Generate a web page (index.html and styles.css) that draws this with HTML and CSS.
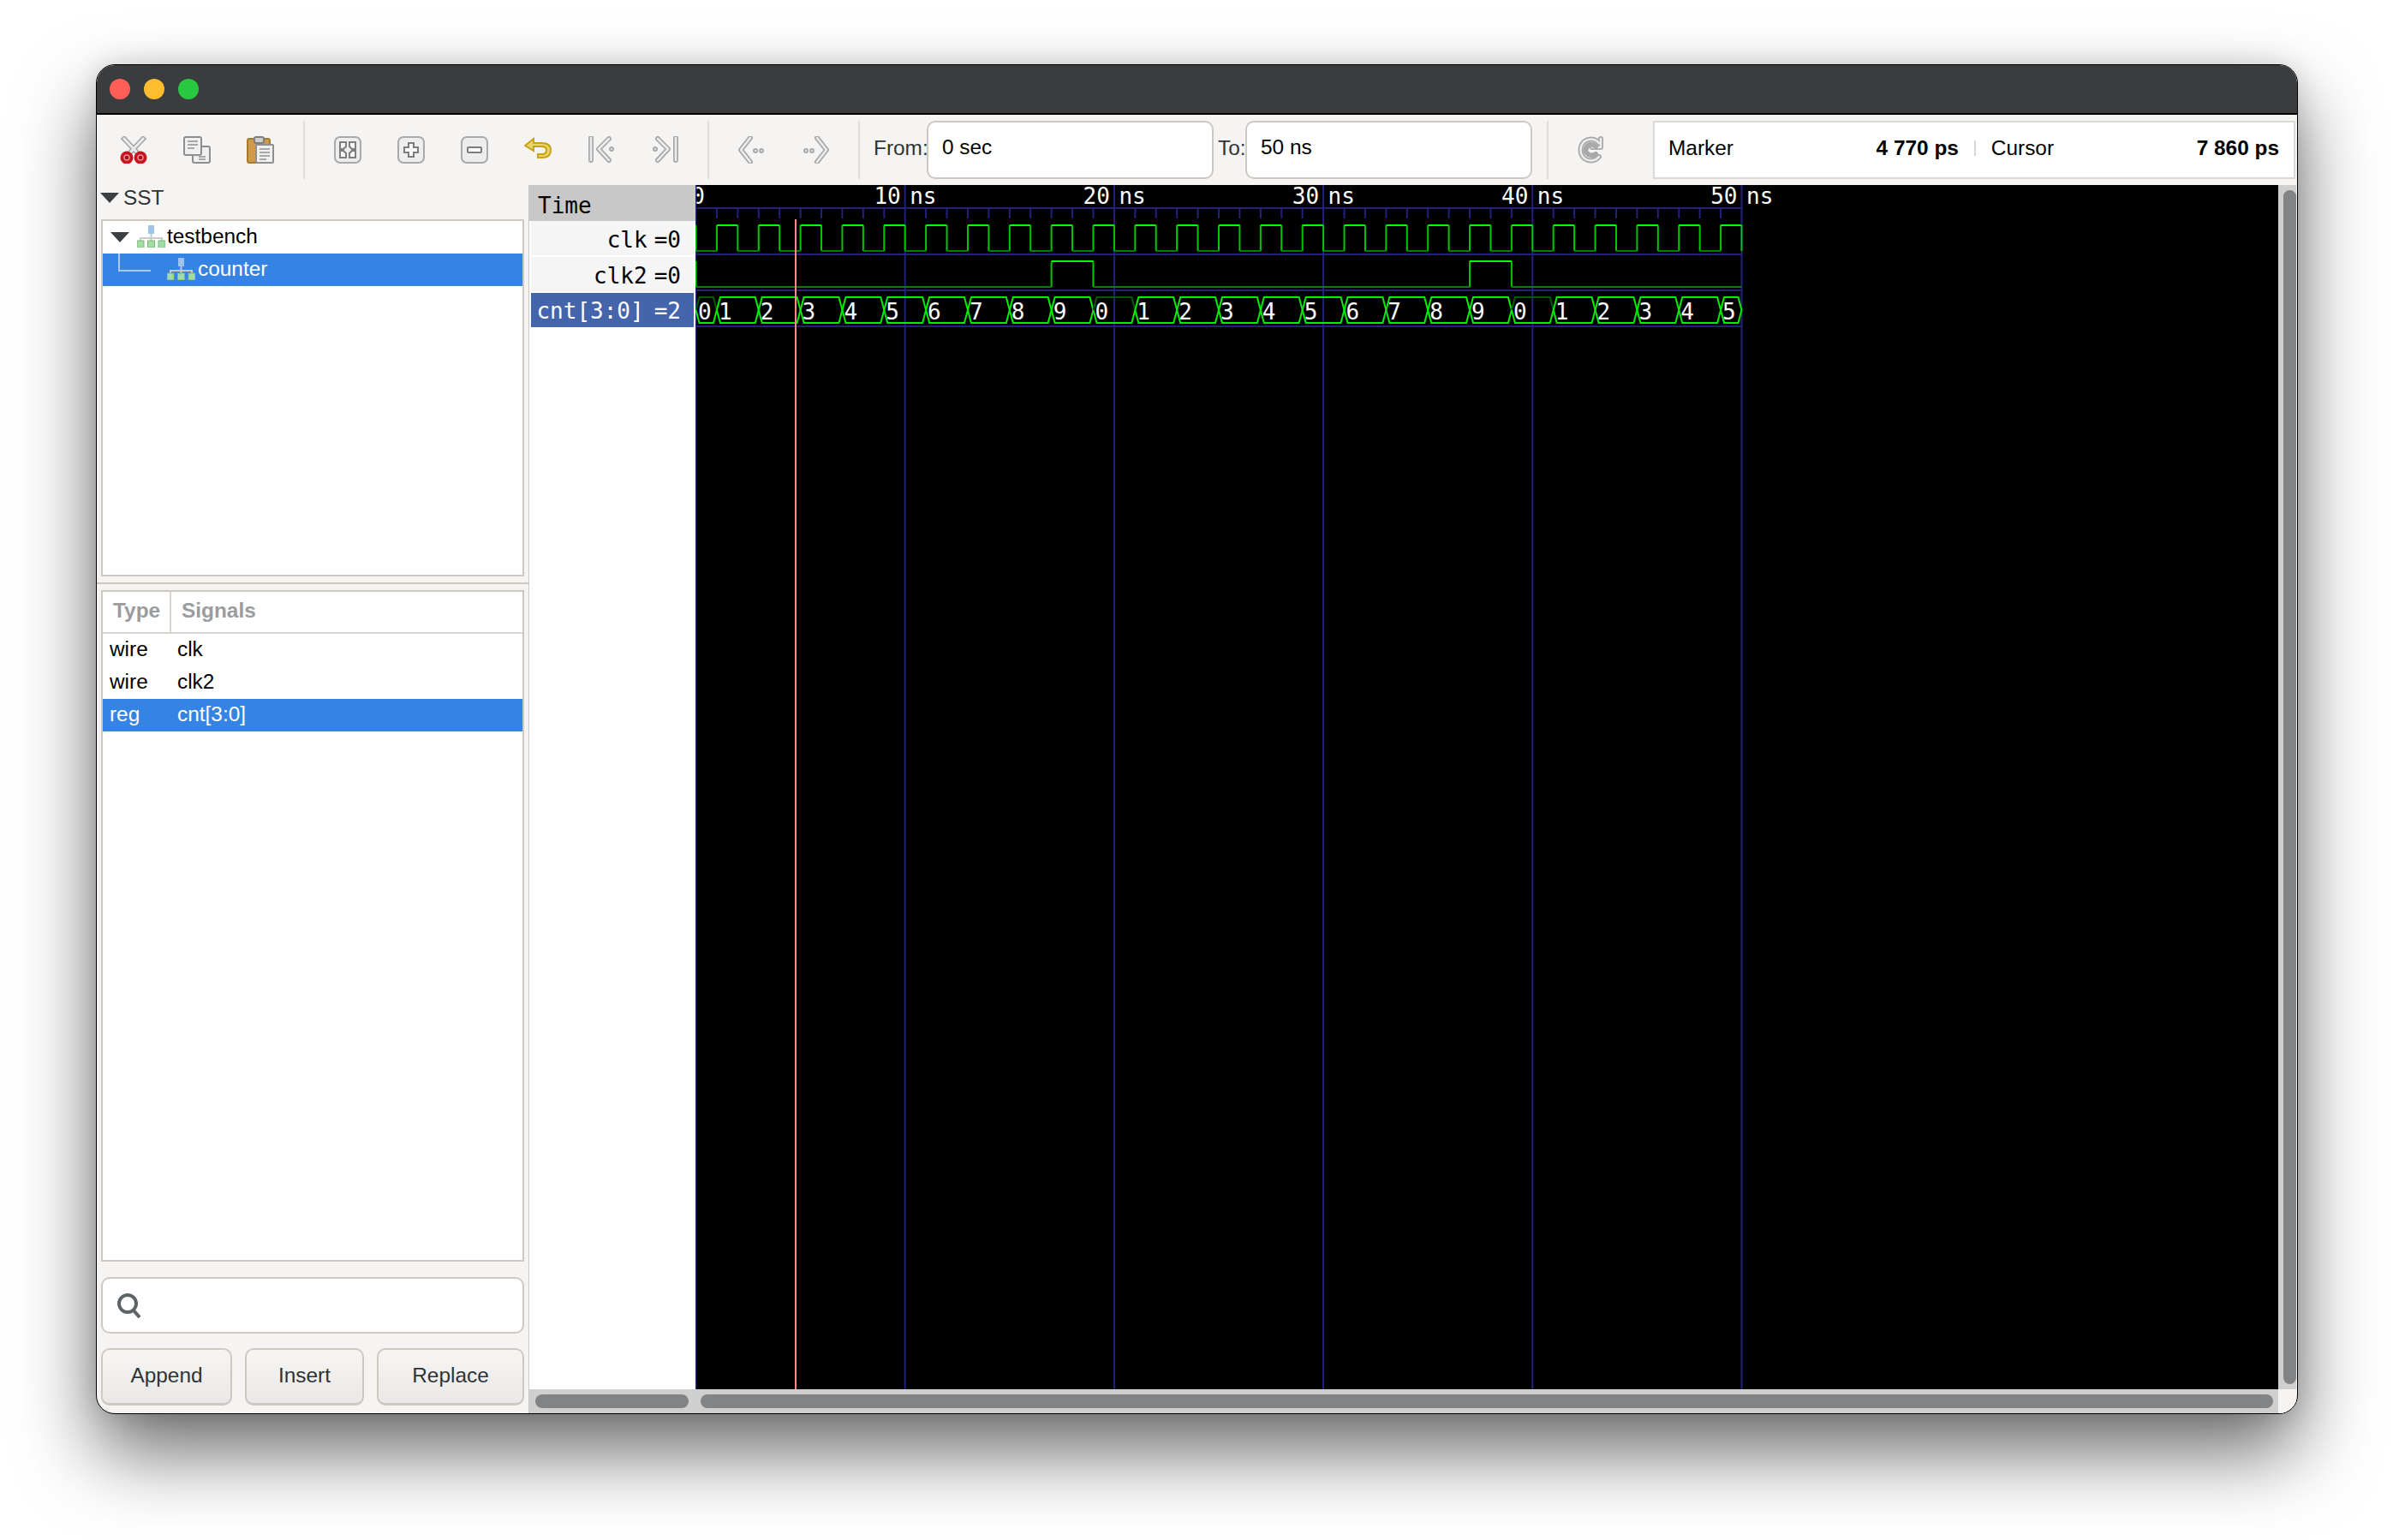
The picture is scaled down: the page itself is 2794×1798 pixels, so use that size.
FILE: index.html
```html
<!DOCTYPE html>
<html lang="en">
<head>
    <meta charset="UTF-8">
    <link rel="stylesheet" href="styles.css">
    <title>GTKWave</title>
</head>
<body>
    <div id="window">
        <div class="titlebar">
            <span class="light red"></span>
            <span class="light yellow"></span>
            <span class="light green"></span>
        </div>

        <div class="toolbar">
            <svg class="icon" viewBox="0 0 32 32">
                <path class="blade" d="M3 1 21 20M29 1 11 20"/>
                <path class="blade-in" d="M4 2 21 20M28 2 11 20"/>
                <circle class="ring" cx="8" cy="25" r="7.5"/>
                <circle class="ring" cx="24" cy="25" r="7.5"/>
                <circle class="ring-in" cx="8" cy="25" r="3"/>
                <circle class="ring-in" cx="24" cy="25" r="3"/>
            </svg>
            <svg class="icon" viewBox="0 0 32 32">
                <rect class="sheet" x="11" y="12" width="20" height="19" rx="2"/>
                <path class="txt" d="M18 24h8M18 27h8"/>
                <rect class="sheet" x="1" y="1" width="20" height="21" rx="2"/>
                <path class="txt" d="M5 6h12M5 10h12M5 14h8"/>
            </svg>
            <svg class="icon" viewBox="0 0 32 32">
                <rect class="board" x="1" y="3" width="26" height="28" rx="2"/>
                <rect class="clip" x="9" y="1" width="11" height="7" rx="2"/>
                <rect class="sheet" x="11" y="10" width="20" height="21" rx="1"/>
                <path class="txt" d="M15 15h12M15 19h12M15 23h12M15 27h8"/>
            </svg>
            <span class="sep"></span>
            <svg class="icon" viewBox="0 0 32 32">
                <rect class="key" x="1" y="1" width="30" height="30" rx="6"/>
                <path class="mark" d="M7 7h7v5l-3 3H7zM25 7h-7v5l3 3h4zM7 25h7v-5l-3-3H7zM25 25h-7v-5l3-3h4z"/>
            </svg>
            <svg class="icon" viewBox="0 0 32 32">
                <rect class="key" x="1" y="1" width="30" height="30" rx="6"/>
                <path class="mark" d="M13 8h6v5h5v6h-5v5h-6v-5H8v-6h5z"/>
            </svg>
            <svg class="icon" viewBox="0 0 32 32">
                <rect class="key" x="1" y="1" width="30" height="30" rx="6"/>
                <rect class="mark" x="8" y="13" width="16" height="6" rx="1"/>
            </svg>
            <svg class="icon" viewBox="0 0 32 32">
                <path class="undo" d="M1 11 11 3v5h9c7 0 11 3 11 8 0 6-4 9-10 9h-5v-4h5c3 0 5-2 5-5 0-2-2-4-6-4h-9v5z"/>
            </svg>
            <svg class="icon nudge" viewBox="0 0 32 32">
                <path class="nav" d="M3 2v26M24 3 12 15l12 13"/>
                <path class="nav-in" d="M3 2v26M24 3 12 15l12 13"/>
                <circle class="dot" cx="27" cy="15" r="2"/>
            </svg>
            <svg class="icon" viewBox="0 0 32 32">
                <path class="nav" d="M29 2v26M8 3l12 12L8 28"/>
                <path class="nav-in" d="M29 2v26M8 3l12 12L8 28"/>
                <circle class="dot" cx="5" cy="15" r="2"/>
            </svg>
            <span class="sep"></span>
            <svg class="icon" viewBox="0 0 32 32">
                <path class="nav" d="M14 2 3 16l11 14"/>
                <path class="nav-in" d="M14 2 3 16l11 14"/>
                <circle class="dot" cx="20" cy="17" r="2"/>
                <circle class="dot" cx="27" cy="17" r="2"/>
            </svg>
            <svg class="icon" viewBox="0 0 32 32">
                <path class="nav" d="M18 2l11 14-11 14"/>
                <path class="nav-in" d="M18 2l11 14-11 14"/>
                <circle class="dot" cx="5" cy="17" r="2"/>
                <circle class="dot" cx="12" cy="17" r="2"/>
            </svg>
            <span class="sep sep-range"></span>
            <label class="range-label">From:</label>
            <div class="entry">0 sec</div>
            <label class="range-label to-label">To:</label>
            <div class="entry">50 ns</div>
            <span class="sep sep-reload"></span>
            <svg class="icon" viewBox="0 0 32 32">
                <path class="nav" d="M26 8C22 3 15 2 9 6 3 11 3 21 9 26c6 4 13 3 17-2M28 3v10H18"/>
                <path class="nav-in" d="M26 8C22 3 15 2 9 6 3 11 3 21 9 26c6 4 13 3 17-2M28 3v10H18"/>
                <path class="nav" d="M22 12c-3-3-8-3-10 0-2 3-2 6 0 8 3 3 7 3 10 1"/>
            </svg>
            <div class="readout">
                <span class="readout-name">Marker</span>
                <b class="readout-val">4 770 ps</b>
                <span class="readout-sep"></span>
                <span class="readout-name cursor-name">Cursor</span>
                <b class="readout-val">7 860 ps</b>
            </div>
        </div>

        <div class="main">
            <div class="sidebar">
                <div class="sst"><span class="arrow"></span>SST</div>
                <div class="tree box">
                    <div class="tree-row">
                        <span class="arrow tree-arrow"></span>
                        <svg class="hier" viewBox="0 0 33 26">
                            <rect class="hier-top" x="13" y="0" width="7" height="10"/>
                            <path class="hier-line" d="M16.5 10v5M4 19v-4h25v4M16.5 15v4"/>
                            <rect class="hier-leaf" x="0" y="18" width="8" height="8"/>
                            <rect class="hier-leaf" x="12.5" y="18" width="8" height="8"/>
                            <rect class="hier-leaf" x="25" y="18" width="8" height="8"/>
                        </svg>
                        <span>testbench</span>
                    </div>
                    <div class="tree-row selected child">
                        <span class="branch"></span>
                        <svg class="hier" viewBox="0 0 33 26">
                            <rect class="hier-top" x="13" y="0" width="7" height="10"/>
                            <path class="hier-line" d="M16.5 10v5M4 19v-4h25v4M16.5 15v4"/>
                            <rect class="hier-leaf" x="0" y="18" width="8" height="8"/>
                            <rect class="hier-leaf" x="12.5" y="18" width="8" height="8"/>
                            <rect class="hier-leaf" x="25" y="18" width="8" height="8"/>
                        </svg>
                        <span>counter</span>
                    </div>
                </div>
                <div class="pane-handle"></div>
                <div class="signals box">
                    <div class="signals-head">
                        <span class="head-type">Type</span>
                        <span class="head-name">Signals</span>
                    </div>
                    <div class="signal-row"><span class="col-type">wire</span><span>clk</span></div>
                    <div class="signal-row"><span class="col-type">wire</span><span>clk2</span></div>
                    <div class="signal-row selected"><span class="col-type">reg</span><span>cnt[3:0]</span></div>
                </div>
                <div class="search">
                    <svg class="search-icon" viewBox="0 0 30 30">
                        <circle cx="13" cy="13" r="10"/>
                        <path d="M20 21l7 8"/>
                    </svg>
                </div>
                <div class="buttons">
                    <button class="btn btn-append">Append</button>
                    <button class="btn btn-insert">Insert</button>
                    <button class="btn btn-replace">Replace</button>
                </div>
            </div>

            <div class="viewer">
                <div class="names">
                    <div class="names-head">Time</div>
                    <div class="name-row"><span>clk</span><span class="name-val">=0</span></div>
                    <div class="name-row"><span>clk2</span><span class="name-val">=0</span></div>
                    <div class="name-row current"><span>cnt[3:0]</span><span class="name-val">=2</span></div>
                </div>
                <svg id="wave" width="1848" height="1406" viewBox="0 0 1848 1406"></svg>
                <div class="vscroll"><div class="thumb"></div></div>
                <div class="hscroll names-scroll"><div class="thumb"></div></div>
                <div class="hscroll wave-scroll"><div class="thumb"></div></div>
                <div class="corner"></div>
            </div>
        </div>
    </div>

    <script>
        let wave = document.getElementById('wave'),
            svg = '',
            step = 24.42
        function x(t){
            return 0.5 + t * step
        }
        function line(cls, d){
            svg += `<path class="${cls}" d="${d}"/>`
        }
        function text(cls, px, py, str){
            svg += `<text class="${cls}" x="${px}" y="${py}">${str}</text>`
        }

        // grid and ruler
        let ticks = ''
        for(let t = 0; t <= 50; t++){
            if(t % 10 == 0){
                ticks += `M${x(t)} 0V1406`
                if(t > 0){
                    text('label end', x(t) - 5, 22, t)
                    text('label', x(t) + 5.5, 22, 'ns')
                }
            }else{
                ticks += `M${x(t)} 27V39`
            }
        }
        text('label end', 11, 22, 0)
        line('grid', ticks + `M0 27H${x(50)}M0 81H${x(50)}M0 123H${x(50)}M0 165H${x(50)}`)

        // single bit signal: list of edges, starts low
        function bit(edges, hi, lo){
            let level = 0, from = 0, high = '', low = '', side = `M${x(0)} ${hi}V${lo}`
            edges.concat([50]).forEach(t=>{
                if(level){
                    high += `M${x(from)} ${hi}H${x(t)}`
                }else{
                    low += `M${x(from)} ${lo}H${x(t)}`
                }
                if(t < 50 || level){
                    side += `M${x(t)} ${hi}V${lo}`
                }
                level = 1 - level
                from = t
            })
            line('side', side)
            line('low', low)
            line('high', high)
        }
        let clk = []
        for(let t = 1; t < 50; t++){
            clk.push(t)
        }
        bit(clk, 47, 77)
        bit([17, 19, 37, 39], 89, 119)

        // cnt[3:0]
        let busTop = 131, busBot = 161, busMid = 146, slope = 4
        let edges = [0]
        for(let t = 1; t < 50; t += 2){
            edges.push(t)
        }
        edges.push(50)
        edges.slice(0, -1).forEach((t, i)=>{
            let a = x(t), b = x(edges[i + 1]), val = i % 10
            let upper = `M${a} ${busMid}L${a + slope} ${busTop}H${b - slope}L${b} ${busMid}`
            let lower = `M${a} ${busMid}L${a + slope} ${busBot}H${b - slope}L${b} ${busMid}`
            line(val == 0 ? 'bus-zero' : 'bus', upper)
            line('bus', lower)
            text('label', i == 0 ? 3 : a + 2, 157, val)
        })

        // marker
        line('marker', `M${x(4.77)} 40V1406`)
        wave.innerHTML = svg
    </script>
</body>
</html>
```

FILE: styles.css
```css
body{
    margin: 0;
    height: 1798px;
    box-sizing: border-box;
    padding: 75px 0 0 112px;
    background: #fff;
    overflow: hidden;
    font-family: "Liberation Sans", Arial, sans-serif;
    font-size: 24.4px;
    color: #000;
}
#window{
    width: 2571px;
    height: 1576px;
    box-sizing: border-box;
    border: 1px solid #000;
    border-radius: 22px;
    overflow: hidden;
    background: #f5f4f2;
    box-shadow: 0 44px 90px rgba(0,0,0,.58), 0 0 30px rgba(0,0,0,.12);
    display: flex;
    flex-direction: column;
}

/* title bar */
.titlebar{
    height: 56px;
    flex: none;
    background: #3b3c3e;
    border-bottom: 2px solid #000;
    display: flex;
    align-items: center;
    gap: 16px;
    padding-left: 15px;
}
.light{
    width: 24px;
    height: 24px;
    border-radius: 50%;
}
.red{background: #ff5f57;}
.yellow{background: #febc2e;}
.green{background: #28c840;}

/* toolbar */
.toolbar{
    height: 82px;
    flex: none;
    display: flex;
    align-items: center;
    padding-left: 27px;
    gap: 42px;
}
.icon{
    width: 32px;
    height: 32px;
    flex: none;
    fill: none;
}
.nudge{margin-left: 1px; margin-right: -1px;}
.sep{
    width: 2px;
    height: 68px;
    background: #dfdedb;
    margin: 0 -8px;
    flex: none;
}
.sep-range{margin-right: -26px;}
.sep-reload{margin-left: -25px; margin-right: -9px;}
.range-label{
    color: #2e3436;
    width: 62px;
    margin-right: -42px;
    padding-bottom: 5px;
    flex: none;
}
.to-label{
    width: 32px;
    margin-left: -37px;
}
.entry{
    width: 335px;
    height: 68px;
    flex: none;
    box-sizing: border-box;
    background: #fff;
    border: 2px solid #cdc9c2;
    border-radius: 10px;
    padding-left: 16px;
    line-height: 57px;
}
.readout{
    width: 750px;
    height: 68px;
    box-sizing: border-box;
    flex: none;
    margin-left: 15px;
    background: #fff;
    border: 2px solid #dcdad6;
    padding: 0 17px 5px 16px;
    display: flex;
    align-items: center;
    line-height: 57px;
}
.readout-name{margin-right: auto;}
.readout-sep{
    width: 2px;
    height: 18px;
    background: #d8d8d8;
    margin: 0 18px;
}
.cursor-name{margin-right: auto;}

/* toolbar icon parts */
.blade{stroke: #a5a5a5; stroke-width: 6;}
.blade-in{stroke: #e9e9e9; stroke-width: 3;}
.ring{fill: #c8141f;}
.ring-in{fill: #b00c18; stroke: #e88a90; stroke-width: 1.5;}
.sheet{fill: #f0f0ee; stroke: #8e8e8e; stroke-width: 2;}
.txt{stroke: #a8a8a8; stroke-width: 2;}
.board{fill: #cf9a4c; stroke: #a97a2c; stroke-width: 2;}
.clip{fill: #cfcfcf; stroke: #7f7f7f; stroke-width: 2;}
.key{fill: #ededeb; stroke: #a9a9a9; stroke-width: 2;}
.mark{fill: #f8f8f8; stroke: #7d7d7d; stroke-width: 2;}
.undo{fill: #e9d46a; stroke: #c8a414; stroke-width: 2;}
.nav{stroke: #a9a9a9; stroke-width: 6; stroke-linecap: round; stroke-linejoin: round; fill: none;}
.nav-in{stroke: #ececec; stroke-width: 2.5; stroke-linecap: round; stroke-linejoin: round; fill: none;}
.dot{fill: #eee; stroke: #a9a9a9; stroke-width: 2;}

/* main area */
.main{
    flex: 1;
    display: flex;
    min-height: 0;
}
.sidebar{
    width: 505px;
    flex: none;
    box-sizing: border-box;
    border-right: 1px solid #cdc9c2;
    padding: 0 5px;
    display: flex;
    flex-direction: column;
}
.sst{
    height: 40px;
    flex: none;
    display: flex;
    align-items: center;
    gap: 5px;
    padding-bottom: 10px;
    box-sizing: border-box;
    color: #2e3436;
}
.arrow{
    width: 0;
    height: 0;
    flex: none;
    border-left: 11px solid transparent;
    border-right: 11px solid transparent;
    border-top: 12px solid #3c3f41;
    margin-left: -1px;
}
.box{
    box-sizing: border-box;
    background: #fff;
    border: 2px solid #cdc9c2;
    flex: none;
}
.tree{height: 417px;}
.tree-row{
    height: 38px;
    box-sizing: border-box;
    padding-bottom: 3px;
    display: flex;
    align-items: center;
    gap: 2px;
}
.tree-arrow{margin: 3px 7px 0 9px;}
.hier{
    width: 33px;
    height: 26px;
    flex: none;
}
.hier-top{fill: #9cc4ee;}
.hier-line{stroke: #c9c9c9; stroke-width: 2; fill: none;}
.hier-leaf{fill: #a2dca2; stroke: #78b878; stroke-width: 1;}
.selected{
    background: #3584e4;
    color: #fff;
}
.child{position: relative; padding-left: 75px; gap: 3px;}
.branch{
    position: absolute;
    left: 18px;
    top: 0;
    width: 36px;
    height: 19px;
    border-left: 2px solid #a9c9f2;
    border-bottom: 2px solid #a9c9f2;
}
.pane-handle{
    height: 16px;
    flex: none;
    margin: 0 -5px;
    background: linear-gradient(#f5f4f2 7px, #cdc9c2 7px, #cdc9c2 9px, #f5f4f2 9px);
}
.signals{height: 784px;}
.signals-head{
    height: 47px;
    display: flex;
    align-items: center;
    border-bottom: 2px solid #d8d5d0;
    font-weight: bold;
    color: #9a9c9e;
}
.head-type{
    width: 80px;
    box-sizing: border-box;
    height: 100%;
    padding-left: 12px;
    line-height: 43px;
    border-right: 2px solid #d8d5d0;
}
.head-name{padding-left: 12px; padding-bottom: 4px;}
.signal-row{
    height: 38px;
    box-sizing: border-box;
    padding-bottom: 2px;
    display: flex;
    align-items: center;
}
.col-type{
    width: 87px;
    padding-left: 8px;
    box-sizing: border-box;
}
.search{
    height: 66px;
    flex: none;
    margin-top: 18px;
    box-sizing: border-box;
    background: #fff;
    border: 2px solid #cdc9c2;
    border-radius: 10px;
    display: flex;
    align-items: center;
    padding-left: 16px;
}
.search-icon{
    width: 30px;
    height: 30px;
    fill: none;
    stroke: #5c6466;
    stroke-width: 4;
}
.buttons{
    display: flex;
    gap: 15px;
    margin-top: 17px;
}
.btn{
    height: 67px;
    box-sizing: border-box;
    border: 2px solid #cdc9c2;
    border-bottom-width: 3px;
    border-radius: 10px;
    background: linear-gradient(#f6f5f3, #e9e8e6);
    color: #2e3436;
    font: inherit;
    padding: 0 0 2px;
}
.btn-append{width: 153px;}
.btn-insert{width: 139px;}
.btn-replace{width: 172px;}

/* waveform viewer */
.viewer{
    flex: 1;
    display: grid;
    grid-template-columns: 194px 1848px 21px;
    grid-template-rows: 1406px 1fr;
    min-width: 0;
}
.names{
    position: relative;
    z-index: 1;
    background: #fff;
    font-family: "DejaVu Sans Mono", monospace;
    font-size: 26px;
}
.names-head{
    height: 42px;
    box-sizing: border-box;
    background: #c8c8c8;
    padding: 6px 0 0 10px;
    line-height: 36px;
}
.name-row{
    height: 40px;
    margin: 0 2px 2px;
    background: #f5f5f5;
    display: flex;
    justify-content: flex-end;
    align-items: center;
    padding: 4px 15px 0 0;
    box-sizing: border-box;
}
.name-val{margin-left: 8px;}
.current{
    background: #4464ac;
    color: #fff;
    padding-top: 2px;
}
.current .name-val{margin-left: 12px;}
#wave{
    display: block;
    overflow: visible;
    background: #000;
    font-family: "DejaVu Sans Mono", monospace;
    font-size: 26px;
}
#wave path{fill: none; stroke-width: 2;}
#wave .grid{stroke: #222278;}
#wave .high{stroke: #00ff00;}
#wave .low{stroke: #008000;}
#wave .side{stroke: #00c800;}
#wave .bus{stroke: #00ee00;}
#wave .bus-zero{stroke: #005c00;}
#wave .marker{stroke: #ff8a8a;}
.label{fill: #fff;}
.end{text-anchor: end;}
.vscroll{
    background: #cfcfcf;
    padding: 6px 0 6px 6px;
    box-sizing: border-box;
}
.vscroll .thumb{
    height: 100%;
    border-radius: 8px;
    background: #828384;
}
.hscroll{
    background: #cfcfcf;
    box-sizing: border-box;
    padding-top: 6px;
}
.hscroll .thumb{
    height: 16px;
    border-radius: 8px;
    background: #828384;
}
.names-scroll{padding-left: 7px; padding-right: 8px;}
.wave-scroll{padding-left: 6px; padding-right: 6px;}
.corner{background: #f5f4f2;}
```
